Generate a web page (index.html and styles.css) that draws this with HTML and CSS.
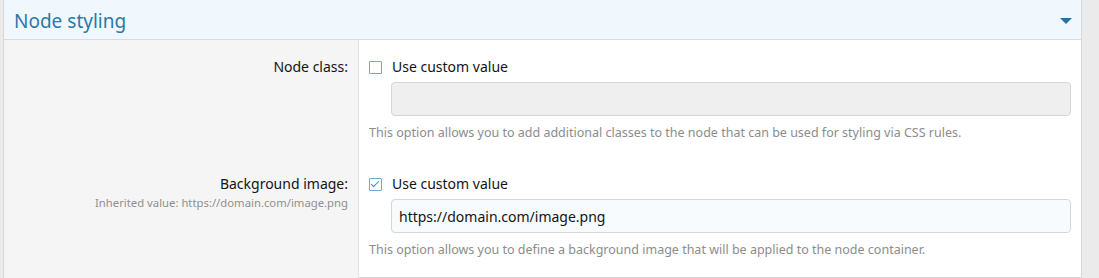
FILE: index.html
```html
<!DOCTYPE html>
<html lang="en">
<head>
  <meta charset="UTF-8">
  <title>Node styling</title>
  <link rel="stylesheet" href="styles.css">
</head>
<body>
<div class="panel">
  <div class="panel-head">
    <h2>Node styling</h2>
    <span class="toggle"></span>
  </div>

  <div class="row">
    <div class="row-label">
      <label>Node class:</label>
    </div>
    <div class="row-field">
      <label class="check"><span class="box"></span>Use custom value</label>
      <input class="field" type="text" value="" disabled>
      <p class="hint">This option allows you to add additional classes to the node that can be used for styling via CSS rules.</p>
    </div>
  </div>

  <div class="row">
    <div class="row-label">
      <label>Background image:</label>
      <span class="inherited">Inherited value: https://domain.com/image.png</span>
    </div>
    <div class="row-field">
      <label class="check"><span class="box checked"></span>Use custom value</label>
      <input class="field active" type="text" value="https://domain.com/image.png">
      <p class="hint">This option allows you to define a background image that will be applied to the node container.</p>
    </div>
  </div>
</div>
</body>
</html>
```
FILE: styles.css
```css
body {
  margin: 0;
  background: #ebebeb;
  font-family: "Noto Sans", "Open Sans", sans-serif;
  color: #141414;
}

.panel {
  margin: 0 17px 0 3px;
  border: 1px solid #d8d8d8;
  border-top: none;
  background: #fff;
  height: 278px;
  box-sizing: border-box;
}

.panel-head {
  display: flex;
  align-items: center;
  justify-content: space-between;
  height: 39px;
  padding: 0 9px 0 10px;
  background: #f0f7fd;
  border-bottom: 1px solid #d3dde6;
}
.panel-head h2 {
  margin: 0;
  font-size: 19px;
  font-weight: normal;
  color: #2b79a8;
  position: relative;
  top: 1px;
}
.toggle {
  width: 0;
  height: 0;
  border-left: 6px solid transparent;
  border-right: 6px solid transparent;
  border-top: 6px solid #2470a8;
  margin-top: 3px;
}

.row {
  display: flex;
}

.row-label {
  width: 355px;
  flex: none;
  background: #f5f5f5;
  border-right: 1px solid #e2e2e2;
  box-sizing: border-box;
  padding: 17px 10px 0 0;
  text-align: right;
}
.row-label label {
  display: block;
  font-size: 14px;
  line-height: 20px;
}
.inherited {
  display: block;
  font-size: 11.3px;
  color: #8f8f8f;
  margin-top: 1px;
}

.row-field {
  flex: 1;
  padding: 17px 10px 0 10px;
}

.check {
  display: flex;
  align-items: center;
  font-size: 14px;
  line-height: 20px;
}
.box {
  width: 11px;
  height: 11px;
  border: 1px solid #6aaad6;
  border-radius: 1px;
  margin: 0 10px 0 0;
  position: relative;
}
.box.checked:after {
  content: "";
  position: absolute;
  left: 3px;
  top: 0px;
  width: 3px;
  height: 7px;
  border: solid #3f86bd;
  border-width: 0 1.5px 1.5px 0;
  transform: rotate(45deg);
}

.field {
  display: block;
  box-sizing: border-box;
  width: calc(100% - 22px);
  margin: 5px 0 0 22px;
  height: 34px;
  padding: 0 7px;
  border: 1px solid #d6d6d6;
  border-radius: 4px;
  background: #efefef;
  font-family: inherit;
  font-size: 14px;
  color: #141414;
}
.field.active {
  background: #f7fbfe;
}

.hint {
  margin: 8px 0 0 0;
  font-size: 12.5px;
  color: #8c8c8c;
  padding-bottom: 16px;
}
.row:last-child .hint {
  padding-bottom: 30px;
}
```
